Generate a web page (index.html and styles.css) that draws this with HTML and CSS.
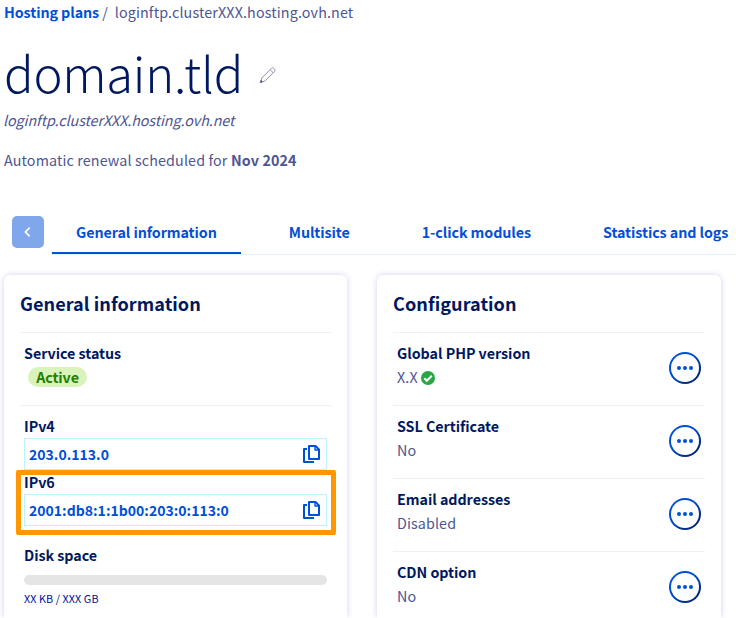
FILE: index.html
```html
<!DOCTYPE html>
<html lang="en">
<head>
<meta charset="utf-8">
<title>Hosting plans</title>
<link rel="stylesheet" href="styles.css">
</head>
<body>
<header class="head">
  <nav class="crumbs"><a class="crumb-link">Hosting plans</a><span class="slash">/</span><span class="crumb-host">loginftp.clusterXXX.hosting.ovh.net</span></nav>
  <div class="title-row">
    <h1 class="title">domain.tld</h1>
    <svg class="pencil" width="18" height="18" viewBox="0 0 18 18" fill="none" stroke="#75759c" stroke-width=".8" stroke-linejoin="round"><path d="M1.2 16.6 2.8 12 12.500 2.200Q13.500 1.200 14.500 2.200L15.700 3.400Q16.500 4.400 15.700 5.300L5.800 15.100ZM11.200 3.700 14.200 6.700"/><path d="M1.200 16.600 2 14.200 3.700 15.800Z" fill="#3c3c78"/></svg>
  </div>
  <p class="subtitle">loginftp.clusterXXX.hosting.ovh.net</p>
  <p class="renewal">Automatic renewal scheduled for <b class="renewal-date">Nov 2024</b></p>
</header>
<nav class="tabs">
  <button class="prev" aria-label="Previous"><svg width="8" height="12" viewBox="0 0 8 12" fill="none" stroke="#fff" stroke-width="1.700"><path d="M5.700 1.700 1.500 6l4.200 4.300"/></svg></button>
  <div class="tablist">
    <a class="tab active">General information</a>
    <a class="tab">Multisite</a>
    <a class="tab">1-click modules</a>
    <a class="tab">Statistics and logs</a>
  </div>
</nav>
<main class="cards">
  <section class="card">
    <h2 class="card-title">General information</h2>
    <div class="row status">
      <h3 class="label">Service status</h3>
      <span class="badge">Active</span>
    </div>
    <div class="row details">
      <h3 class="label">IPv4</h3>
      <div class="copy"><span class="ip4">203.0.113.0</span><svg class="copy-icon" width="18" height="20" viewBox="0 0 18 20" fill="none" stroke="#0050d7" stroke-width="2" stroke-linejoin="round"><path d="M7 2h6.500L17 5.500V15H7Z"/><path d="M13 2v4h4" stroke-width="1.400"/><path d="M5 5H2v13h10"/></svg></div>
      <div class="ipv6">
        <h3 class="label">IPv6</h3>
        <div class="copy"><span class="ip6">2001:db8:1:1b00:203:0:113:0</span><svg class="copy-icon" width="18" height="20" viewBox="0 0 18 20" fill="none" stroke="#0050d7" stroke-width="2" stroke-linejoin="round"><path d="M7 2h6.500L17 5.500V15H7Z"/><path d="M13 2v4h4" stroke-width="1.400"/><path d="M5 5H2v13h10"/></svg></div>
      </div>
      <h3 class="label disk">Disk space</h3>
      <div class="meter"></div>
      <p class="usage">XX KB / XXX GB</p>
    </div>
  </section>
  <section class="card">
    <h2 class="card-title">Configuration</h2>
    <div class="row option">
      <div><h3 class="label">Global PHP version</h3><p class="value">X.X <svg class="check" width="14" height="14" viewBox="0 0 14 14"><circle cx="7" cy="7" r="7" fill="#28a745"/><path d="m3.300 7.300 2.500 2.500 5-5" fill="none" stroke="#fff" stroke-width="2"/></svg></p></div>
      <button class="more" aria-label="Actions"><i></i><i></i><i></i></button>
    </div>
    <div class="row option">
      <div><h3 class="label">SSL Certificate</h3><p class="value">No</p></div>
      <button class="more" aria-label="Actions"><i></i><i></i><i></i></button>
    </div>
    <div class="row option">
      <div><h3 class="label">Email addresses</h3><p class="value">Disabled</p></div>
      <button class="more" aria-label="Actions"><i></i><i></i><i></i></button>
    </div>
    <div class="row option">
      <div><h3 class="label">CDN option</h3><p class="value">No</p></div>
      <button class="more" aria-label="Actions"><i></i><i></i><i></i></button>
    </div>
  </section>
</main>
</body>
</html>
```
FILE: styles.css
```css
* { box-sizing: border-box; }
html { overflow: hidden; }
body {
  margin: 0;
  width: 736px;
  height: 618px;
  overflow: hidden;
  background: #fff;
  color: #4d5592;
  font: 14.3px/24px "Noto Sans CJK SC", "Noto Sans", sans-serif;
}
h1, h2, h3, p { margin: 0; white-space: nowrap; }
button { padding: 0; border: 0; font: inherit; }
.head { height: 216px; padding-left: 4px; }
.crumbs { display: flex; height: 24px; white-space: nowrap; }
.crumb-link { color: #0050d7; font-weight: 700; letter-spacing: -.08px; }
.slash { margin: 0 7px 0 3px; }
.crumb-host { letter-spacing: .14px; }
.title-row { display: flex; align-items: center; height: 84px; padding-top: 11px; gap: 16px; }
.title { font-size: 49px; line-height: 67px; font-weight: 300; letter-spacing: -.25px; color: #00185e; }
.pencil { margin-top: 6px; }
.subtitle { font-style: italic; letter-spacing: -.07px; margin-left: -1px; }
.renewal { margin-top: 16px; letter-spacing: .13px; }
.tabs { display: flex; height: 38px; margin-left: 12px; }
.prev {
  flex: none; width: 32px; height: 32px; margin-right: 8px; border-radius: 5px;
  background: #80a7eb; display: flex; align-items: center; justify-content: center;
}
.tablist { display: flex; flex: none; width: 684px; height: 39px; border-bottom: 1px solid #def4f9; }
.tab {
  flex: none; height: 38px; padding: 4px 24px; margin-right: 24px;
  color: #0050d7; font-weight: 700; letter-spacing: -.08px; white-space: nowrap;
}
.active { border-bottom: 2px solid #0050d7; }
.cards { display: grid; grid-template-columns: 343px 344px; gap: 30px; padding: 21px 0 0 4px; }
.card {
  height: 343px; padding: 15px 16px 0; border-radius: 6px 6px 0 0; background: #fff;
  box-shadow: 0 0 6px rgba(0, 0, 160, .18);
}
.card-title { height: 42px; font-size: 18.1px; line-height: 27px; letter-spacing: .04px; color: #00185e; }
.row { border-top: 1px solid #f0f0f0; height: 73px; padding: 8px 4px 0; }
.label { font-size: 14.3px; line-height: 24px; letter-spacing: -.04px; color: #00185e; font-weight: 700; }
.value { letter-spacing: .12px; }
.badge {
  display: block; width: 59px; height: 20px; margin: 2px 0 0 4px; border-radius: 10px;
  background: #d9f3bb; color: #218000; font-weight: 700; line-height: 19px; text-align: center;
  letter-spacing: -.1px;
}
.copy {
  display: flex; align-items: center; justify-content: space-between;
  width: 303px; height: 32px; padding: 0 6px 0 4px; border: 1px solid #bef1ff;
  color: #0050d7; font-weight: 700; font-size: 14px; letter-spacing: .02px;
}
.ipv6 {
  width: 320px; height: 65px; margin-left: -8px; padding: 0 3px;
  border: 5px solid #ff9800; border-radius: 2px;
}
.ipv6 .label { line-height: 13px; height: 19px; }
.disk { margin-top: 8px; }
.meter { width: 303px; height: 10px; margin-top: 8px; border-radius: 5px; background: #e5e5e5; }
.usage { margin-top: 3px; font-size: 10.8px; line-height: 20px; letter-spacing: .08px; color: #000e9c; }
.option { display: flex; justify-content: space-between; }
.check { display: inline-block; vertical-align: -2px; }
.more {
  width: 32px; height: 32px; margin: 11px 0 0 0; border-radius: 50%;
  border: 2px solid transparent;
  background: linear-gradient(#fff, #fff) padding-box, linear-gradient(135deg, #0050d7 35%, #00185e) border-box;
  display: flex; align-items: center; justify-content: center; gap: 2px;
}
.more i { width: 4px; height: 4px; border-radius: 50%; background: #0050d7; }
```
